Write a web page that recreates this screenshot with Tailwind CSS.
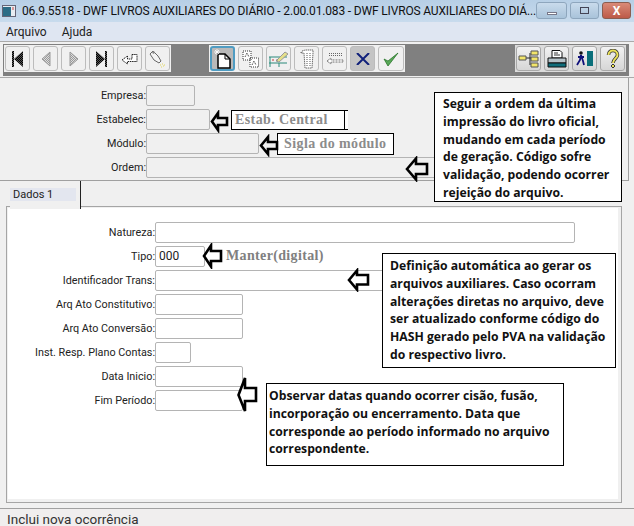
<!doctype html>
<html lang="pt">
<head>
<meta charset="utf-8" />
<title>DWF Livros Auxiliares do Diário</title>
<script src="https://cdn.jsdelivr.net/npm/@tailwindcss/browser@4"></script>
</head>
<body class="bg-[#f0f0f0]">
<!-- dither fills for the old toolbar icons -->
<svg class="absolute w-0 h-0">
  <defs>
    <pattern id="dk" width="2" height="2" patternUnits="userSpaceOnUse"><rect width="2" height="2" fill="#555"/><rect width="1" height="1" fill="#000"/><rect x="1" y="1" width="1" height="1" fill="#000"/></pattern>
    <pattern id="gy" width="2" height="2" patternUnits="userSpaceOnUse"><rect width="2" height="2" fill="#ddd"/><rect width="1" height="1" fill="#999"/><rect x="1" y="1" width="1" height="1" fill="#999"/></pattern>
  </defs>
</svg>
<div class="relative w-[634px] h-[526px] overflow-hidden flex flex-col font-['Roboto',sans-serif] text-[10.8px] text-[#222]">

  <!-- title bar -->
  <div class="h-[22px] shrink-0 flex items-center bg-gradient-to-b from-[#b7cfe6] to-[#c8dbed] pl-[2px]">
    <svg class="w-[14px] h-[12px] mr-[6px]" viewBox="0 0 14 12"><rect x=".5" y=".5" width="13" height="11" fill="#e8edf2" stroke="#667"/><rect x="1" y="2" width="8" height="9" fill="#2c6d86"/><path d="M11 2v3" stroke="#c44"/></svg>
    <span class="text-[12px] tracking-[-0.16px] whitespace-nowrap text-[#111]">06.9.5518 - DWF LIVROS AUXILIARES DO DIÁRIO - 2.00.01.083 - DWF LIVROS AUXILIARES DO DIÁ...</span>
  </div>
  <div class="absolute top-[2px] left-[536px] flex gap-[3px]">
    <div class="w-[31px] h-[17px] rounded-[3px] border border-[#8ea6bd] bg-gradient-to-b from-[#c9dbec] to-[#a9c3da] flex items-center justify-center"><div class="w-[10px] h-[3px] mt-[5px] bg-white border border-[#778]"></div></div>
    <div class="w-[29px] h-[17px] rounded-[3px] border border-[#8ea6bd] bg-gradient-to-b from-[#c9dbec] to-[#a9c3da] flex items-center justify-center"><div class="w-[9px] h-[7px] border border-[#445]"></div></div>
    <div class="w-[29px] h-[17px] rounded-[3px] border border-[#8a5d50] bg-gradient-to-b from-[#d98a78] to-[#bd5a48] flex items-center justify-center text-white font-bold text-[12px] leading-none">X</div>
  </div>

  <!-- menu -->
  <div class="h-[19px] shrink-0 flex items-center gap-[15px] pl-[6px] bg-[#dfe6f2] text-[12px]">
    <span>Arquivo</span><span>Ajuda</span>
  </div>

  <!-- toolbar -->
  <div class="h-[37px] shrink-0 border-y border-[#aaaaaa] pt-[2px] pl-[3px] pr-[5px]">
    <div class="h-[32px] bg-[#808080] flex items-start pt-[1px] pr-[3px] pl-[1px]">
      <div class="flex gap-[3px] bg-[#f0f0f0] p-[1px]">
        <button class="w-[25px] h-[25px] rounded-[3px] border border-[#bcbcbc] bg-[#f0f0f0] flex items-center justify-center"><svg class="w-[13px] h-[16px]" viewBox="0 0 13 16"><path d="M1 0h2v16H1z" fill="url(#dk)"/><path d="M12 0v16L3 8z" fill="url(#dk)"/></svg></button>
        <button class="w-[25px] h-[25px] rounded-[3px] border border-[#bcbcbc] bg-[#f0f0f0] flex items-center justify-center"><svg class="w-[10px] h-[16px]" viewBox="0 0 10 16"><path d="M9 1v14L1 8z" fill="url(#gy)" stroke="#999"/></svg></button>
        <button class="w-[25px] h-[25px] rounded-[3px] border border-[#bcbcbc] bg-[#f0f0f0] flex items-center justify-center"><svg class="w-[10px] h-[16px]" viewBox="0 0 10 16"><path d="M1 1v14l8-7z" fill="url(#gy)" stroke="#999"/></svg></button>
        <button class="w-[25px] h-[25px] rounded-[3px] border border-[#bcbcbc] bg-[#f0f0f0] flex items-center justify-center"><svg class="w-[13px] h-[16px]" viewBox="0 0 13 16"><path d="M10 0h2v16h-2z" fill="url(#dk)"/><path d="M1 0v16l9-8z" fill="url(#dk)"/></svg></button>
        <button class="w-[25px] h-[25px] rounded-[3px] border border-[#bcbcbc] bg-[#f0f0f0] flex items-center justify-center"><svg class="w-[17px] h-[12px]" viewBox="0 0 17 12"><path d="M11 1.500h5v7H6.500V11L1 7l5.500-4v3H11z" fill="#fff" stroke="#222" stroke-dasharray="1.500 .7"/></svg></button>
        <button class="w-[25px] h-[25px] rounded-[3px] border border-[#bcbcbc] bg-[#f0f0f0] flex items-center justify-center"><svg class="w-[18px] h-[18px]" viewBox="0 0 18 18"><path d="M1 4l3-3 5 5 3 5-2 2-5-3z" fill="#f4f4f4" stroke="#666"/><path d="M3 2l2-1 1 2-2 1z" fill="#888"/><path d="M11 15h1M13 14h1M15 15h1M14 16h1M12 17h1" stroke="#e3d85e"/></svg></button>
      </div>
      <div class="flex gap-[3px] ml-[38px] bg-[#f0f0f0] p-[1px]">
        <button class="w-[25px] h-[25px] rounded-[3px] border-2 border-[#4f9cc2] bg-[#b9b9b9] flex items-center justify-center"><svg class="w-[18px] h-[20px]" viewBox="0 0 18 20"><path d="M4 5h7l5 5v9H4z" fill="#fff" stroke="#000" stroke-width="1.500"/><path d="M11 5v5h5" fill="none" stroke="#000"/><path d="M3 0v6M0 3h6M1 1l4 4M5 1L1 5" stroke="#fff" stroke-width=".8"/></svg></button>
        <button class="w-[25px] h-[25px] rounded-[3px] border border-[#bcbcbc] bg-[#f0f0f0] flex items-center justify-center"><svg class="w-[18px] h-[18px]" viewBox="0 0 18 18"><path d="M1 1h8v9H1zM8 8h8.500v9H8z" fill="#fff" stroke="#333" stroke-dasharray="1 1"/><path d="M3 7l2-4 2 4M10 15l2-4 2 4" fill="none" stroke="#444" stroke-dasharray="1 .7"/></svg></button>
        <button class="w-[25px] h-[25px] rounded-[3px] border border-[#bcbcbc] bg-[#f0f0f0] flex items-center justify-center"><svg class="w-[21px] h-[18px]" viewBox="0 0 21 18"><path d="M1 7h18M1 13h18M2 7v10M11 13v4" fill="none" stroke="#2a8a7a"/><path d="M8 11l9-9 3 2-9 8z" fill="#e5e08a" stroke="#999"/><path d="M4 10h2" stroke="#c33"/><path d="M8 10h2" stroke="#888"/></svg></button>
        <button class="w-[25px] h-[25px] rounded-[3px] border border-[#bcbcbc] bg-[#f0f0f0] flex items-center justify-center"><svg class="w-[14px] h-[20px]" viewBox="0 0 14 20"><path d="M1 4c0-2 3-3 6-3h6v3l-1 15H5L4 4z" fill="#fff" stroke="#333" stroke-dasharray="1 1"/><path d="M7 4v14M10 4v14" stroke="#555" stroke-dasharray="1 1"/></svg></button>
        <button class="w-[25px] h-[25px] rounded-[3px] border border-[#bcbcbc] bg-[#f0f0f0] flex items-center justify-center"><svg class="w-[18px] h-[13px]" viewBox="0 0 18 13"><path d="M3 1.500h14M3 3.500h14" stroke="#666" stroke-dasharray="1 1"/><path d="M1 9l4-3v2h12v2H5v2z" fill="#fff" stroke="#333" stroke-width=".7" stroke-dasharray="1 .5"/></svg></button>
        <button class="w-[25px] h-[25px] rounded-[3px] border border-[#bcbcbc] bg-[#c4c4c4] flex items-center justify-center"><svg class="w-[14px] h-[12px]" viewBox="0 0 14 12"><path d="M1 0l12 12M13 0L1 12" stroke="#10207a" stroke-width="2"/></svg></button>
        <button class="w-[26px] h-[25px] rounded-[3px] border border-[#bcbcbc] bg-[#f0f0f0] flex items-center justify-center"><svg class="w-[16px] h-[14px]" viewBox="0 0 16 14"><path d="M1 7l4 7L15 1 5 9z" fill="#58a858" stroke="#1c6b1c" stroke-width=".7"/></svg></button>
      </div>
      <div class="flex gap-[3px] ml-auto bg-[#dcdcdc] p-[1px]">
        <button class="w-[25px] h-[25px] rounded-[3px] border border-[#a8a8a8] bg-gradient-to-b from-[#f2f2f2] to-[#d6d6d6] flex items-center justify-center"><svg class="w-[21px] h-[18px]" viewBox="0 0 21 18"><path d="M8 8h5M12 3v12" stroke="#222"/><path d="M1 6h7v4H1zM13 1h7v4h-7zM13 7h7v4h-7zM13 13h7v4h-7z" fill="#f2e56a" stroke="#555"/></svg></button>
        <button class="w-[25px] h-[25px] rounded-[3px] border border-[#a8a8a8] bg-gradient-to-b from-[#f2f2f2] to-[#d6d6d6] flex items-center justify-center"><svg class="w-[20px] h-[18px]" viewBox="0 0 20 18"><path d="M5 .5h8l2 2V8H5z" fill="#fff" stroke="#111"/><path d="M7 3h4M7 5h6" stroke="#333"/><path d="M1 8h18v5H1z" fill="#b5c2c8" stroke="#111"/><path d="M1 13h18v4H1z" fill="#0f6d7a" stroke="#111"/></svg></button>
        <button class="w-[25px] h-[25px] rounded-[3px] border border-[#a8a8a8] bg-gradient-to-b from-[#f2f2f2] to-[#d6d6d6] flex items-center justify-center"><svg class="w-[18px] h-[17px]" viewBox="0 0 18 17"><path d="M11 1h6v15h-6z" fill="#0a6f7a"/><circle cx="5" cy="3" r="1.800" fill="#111"/><path d="M5 5L4 10l-3 5M5 5l2 6 1 4M2 7h6" stroke="#10107a" stroke-width="1.800" fill="none"/></svg></button>
        <button class="w-[25px] h-[25px] rounded-[3px] border border-[#a8a8a8] bg-gradient-to-b from-[#f2f2f2] to-[#d6d6d6] flex items-center justify-center"><svg class="w-[14px] h-[20px]" viewBox="0 0 14 20"><path d="M2.500 6c0-6 9-6 9 0 0 3-4.500 4-4.500 8" fill="none" stroke="#333" stroke-width="3.500"/><path d="M2.500 6c0-6 9-6 9 0 0 3-4.500 4-4.500 8" fill="none" stroke="#ece25a" stroke-width="2"/><path d="M7 15l2 2-2 2-2-2z" fill="#ece25a" stroke="#333"/></svg></button>
      </div>
    </div>
  </div>

  <!-- header fields -->
  <div class="w-[629px] h-[103px] shrink-0 pt-[7px] border-b border-r border-[#a0a0a0] flex flex-col gap-[3px]">
    <div class="flex items-center h-[21px]"><span class="w-[146px] text-right pt-[1px]">Empresa:</span><div class="w-[49px] h-[21px] rounded-[2px] border border-[#b4b4b4]"></div></div>
    <div class="flex items-center h-[21px]"><span class="w-[146px] text-right pt-[1px]">Estabelec:</span><div class="w-[64px] h-[21px] rounded-[2px] border border-[#b4b4b4]"></div></div>
    <div class="flex items-center h-[21px]"><span class="w-[146px] text-right pt-[1px]">Módulo:</span><div class="w-[113px] h-[21px] rounded-[2px] border border-[#b4b4b4]"></div></div>
    <div class="flex items-center h-[21px]"><span class="w-[146px] text-right pt-[1px]">Ordem:</span><div class="w-[470px] h-[21px] rounded-[2px] border border-[#b4b4b4]"></div></div>
  </div>

  <!-- tab strip -->
  <div class="h-[25px] shrink-0 flex pl-[10px]">
    <div class="relative z-10 w-[71px] h-[28px] bg-[#f0f0f0] border-r border-[#222] pt-[7px]"><div class="h-[13px] bg-[#e3e6ef] w-[66px] pl-[3px] leading-[13px] text-[11px] text-[#222]">Dados 1</div></div>
  </div>

  <!-- panel -->
  <div class="ml-[6px] w-[616px] h-[297px] shrink-0 border border-[#a5a5a5] bg-[#f0f0f0]">
    <div class="h-[291px] ml-[1px] mt-[1px] mr-[3px] bg-white pt-[14px] flex flex-col gap-[3px]">
      <div class="flex items-center h-[21px]"><span class="w-[147px] text-right pt-[1px]">Natureza:</span><div class="w-[420px] h-[21px] rounded-[2px] border border-[#b4b4b4]"></div></div>
      <div class="flex items-center h-[21px]"><span class="w-[147px] text-right pt-[1px]">Tipo:</span><div class="w-[50px] h-[21px] rounded-[2px] border border-[#b4b4b4] pl-[3px] text-[12px] leading-[19px]">000</div></div>
      <div class="flex items-center h-[21px]"><span class="w-[147px] text-right pt-[1px]">Identificador Trans:</span><div class="w-[420px] h-[21px] rounded-[2px] border border-[#b4b4b4]"></div></div>
      <div class="flex items-center h-[21px]"><span class="w-[147px] text-right pt-[1px]">Arq Ato Constitutivo:</span><div class="w-[88px] h-[21px] rounded-[2px] border border-[#b4b4b4]"></div></div>
      <div class="flex items-center h-[21px]"><span class="w-[147px] text-right pt-[1px]">Arq Ato Conversão:</span><div class="w-[88px] h-[21px] rounded-[2px] border border-[#b4b4b4]"></div></div>
      <div class="flex items-center h-[21px]"><span class="w-[147px] text-right pt-[1px]">Inst. Resp. Plano Contas:</span><div class="w-[36px] h-[21px] rounded-[2px] border border-[#b4b4b4]"></div></div>
      <div class="flex items-center h-[21px]"><span class="w-[147px] text-right pt-[1px]">Data Inicio:</span><div class="w-[88px] h-[21px] rounded-[2px] border border-[#b4b4b4]"></div></div>
      <div class="flex items-center h-[21px]"><span class="w-[147px] text-right pt-[1px]">Fim Período:</span><div class="w-[88px] h-[21px] rounded-[2px] border border-[#b4b4b4]"></div></div>
    </div>
  </div>

  <!-- status bar -->
  <div class="mt-[5px] h-[18px] shrink-0 border-t border-[#a0a0a0] bg-[#f0eeee] pl-[7px] text-[13.5px] leading-[21px] text-[#333] whitespace-nowrap">Inclui nova ocorrência</div>

  <!-- annotations over the form -->
  <div class="absolute left-[231px] top-[110px] w-[117px] h-[20px] bg-white border-y border-l border-black pl-[3px] font-['Liberation_Serif',serif] font-bold text-[14px] leading-[18px] text-[#8c8c8c] tracking-[0.4px]"><span class="absolute right-[3px] top-0 bottom-0 w-px bg-black"></span>Estab. Central</div>
  <div class="absolute left-[277px] top-[133px] w-[117px] h-[22px] bg-white border border-black pl-[6px] font-['Liberation_Serif',serif] font-bold text-[14px] leading-[20px] text-[#8c8c8c] tracking-[0.4px] whitespace-nowrap">Sigla do módulo</div>
  <div class="absolute left-[226px] top-[247px] font-['Liberation_Serif',serif] font-bold text-[14px] leading-[18px] text-[#808080] tracking-[0.35px]">Manter(digital)</div>

  <div class="absolute left-[434px] top-[92px] w-[188px] h-[110px] bg-white border border-black pl-[8px] pt-[2px] font-['Open_Sans',sans-serif] font-bold text-[12.2px] leading-[17.8px] text-[#111] whitespace-nowrap">Seguir a ordem da última<br>impressão do livro oficial,<br>mudando em cada período<br>de geração. Código sofre<br>validação, podendo ocorrer<br>rejeição do arquivo.</div>
  <div class="absolute left-[382px] top-[253px] w-[234px] h-[115px] bg-white border border-black pl-[7px] pt-[3px] font-['Open_Sans',sans-serif] font-bold text-[12.2px] leading-[17.8px] text-[#111] whitespace-nowrap">Definição automática ao gerar os<br>arquivos auxiliares. Caso ocorram<br>alterações diretas no arquivo, deve<br>ser atualizado conforme código do<br>HASH gerado pelo PVA na validação<br>do respectivo livro.</div>
  <div class="absolute left-[266px] top-[383px] w-[298px] h-[83px] bg-white border border-black pl-[2px] pt-[3px] font-['Open_Sans',sans-serif] font-bold text-[12.2px] leading-[17.8px] text-[#111] whitespace-nowrap">Observar datas quando ocorrer cisão, fusão,<br>incorporação ou encerramento. Data que<br>corresponde ao período informado no arquivo<br>correspondente.</div>

  <!-- hand drawn arrows -->
  <svg class="absolute left-[210px] top-[110px] w-[19px] h-[23px]" viewBox="0 0 19 23"><path d="M2 11.500L8 3v5h9v7H8v5z" fill="#f0f0f0" stroke="#000" stroke-width="2.600"/></svg>
  <svg class="absolute left-[259px] top-[134px] w-[20px] h-[23px]" viewBox="0 0 20 23"><path d="M2 11.500L9 3v5h9v7H9v5z" fill="#f0f0f0" stroke="#000" stroke-width="2.600"/></svg>
  <svg class="absolute left-[405px] top-[156px] w-[24px] h-[26px]" viewBox="0 0 24 26"><path d="M2 13L11 2.500V8h11v10H11v5.500z" fill="#f0f0f0" stroke="#000" stroke-width="2.600"/></svg>
  <svg class="absolute left-[202px] top-[243px] w-[21px] h-[26px]" viewBox="0 0 21 26"><path d="M2 13L9 2.500V8h10v10H9v5.500z" fill="#fff" stroke="#000" stroke-width="2.600"/></svg>
  <svg class="absolute left-[347px] top-[268px] w-[23px] h-[24px]" viewBox="0 0 23 24"><path d="M2 12L10 2.500V7h11v9.500H10v5z" fill="#fff" stroke="#000" stroke-width="2.600"/></svg>
  <svg class="absolute left-[236px] top-[376px] w-[23px] h-[37px]" viewBox="0 0 23 37"><path d="M2.500 19L9 2v10h11v13H9v10z" fill="#fff" stroke="#000" stroke-width="2.600"/></svg>
</div>
</body>
</html>
